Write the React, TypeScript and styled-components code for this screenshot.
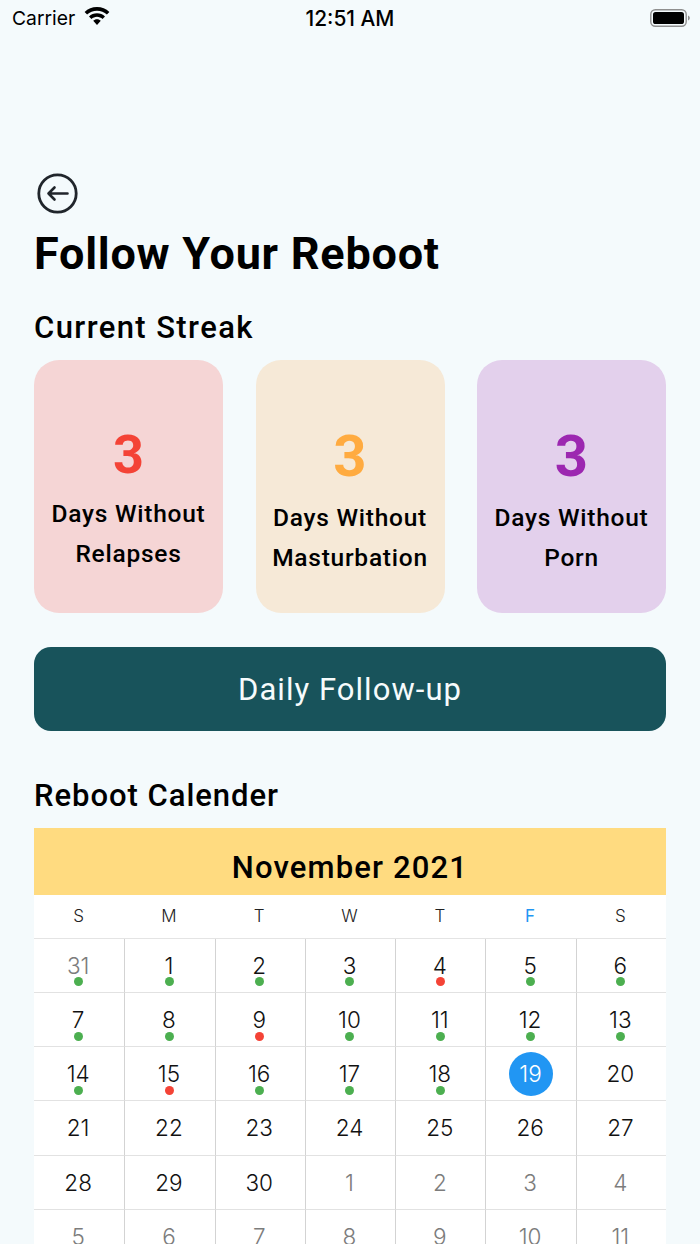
import React from "react";
import styled, { createGlobalStyle } from "styled-components";

const Global = createGlobalStyle`
  html, body { margin: 0; padding: 0; height: 1244px; overflow: hidden; background: #f4fafc; }
  #root { height: 1244px; overflow: hidden; }
`;

const Page = styled.div`
  width: 700px;
  height: 1244px;
  overflow: hidden;
  background: #f4fafc;
  font-family: Roboto, "Liberation Sans", sans-serif;
  color: #000;
`;

const StatusBar = styled.div`
  height: 36px;
  display: grid;
  grid-template-columns: 1fr auto 1fr;
  align-items: center;
  padding: 0 12px;
  font-family: Inter, "Liberation Sans", sans-serif;
  color: #000;
`;

const Carrier = styled.div`
  display: flex;
  align-items: center;
  gap: 9px;
  font-size: 19.3px;
  font-weight: 400;
`;

const WifiIcon = styled.svg`
  margin-top: -4px;
`;

const Clock = styled.div`
  font-size: 20.9px;
  font-weight: 500;
`;

const BatteryWrap = styled.div`
  justify-self: end;
  display: flex;
  margin-right: -3px;
`;

const Content = styled.div`
  padding: 137px 34px 0;
  display: flex;
  flex-direction: column;
`;

const BackButton = styled.button`
  border: 0;
  background: none;
  padding: 0;
  margin: 0 0 0 3px;
  width: 41px;
  height: 41px;
  display: block;
  align-self: flex-start;
`;

const Title = styled.h1`
  margin: 13px 0 0;
  font-size: 45px;
  line-height: 54px;
  font-weight: 700;
  letter-spacing: 0.75px;
`;

const SectionTitle = styled.h2<{ $top: number; $spacing: number }>`
  margin: ${(p) => p.$top}px 0 0;
  font-size: 31px;
  line-height: 40px;
  font-weight: 500;
  letter-spacing: ${(p) => p.$spacing}px;
`;

const Cards = styled.div`
  margin-top: 12px;
  display: grid;
  grid-template-columns: repeat(3, 189px);
  justify-content: space-between;
`;

const Card = styled.div<{ $bg: string; $shift: number }>`
  height: 253px;
  background: ${(p) => p.$bg};
  border-radius: 25px;
  display: flex;
  flex-direction: column;
  align-items: center;
  padding-top: ${(p) => p.$shift}px;
  box-sizing: border-box;
`;

const Count = styled.div<{ $color: string; $size: number }>`
  color: ${(p) => p.$color};
  font-size: ${(p) => p.$size}px;
  font-weight: 700;
  line-height: 60px;
  height: 60px;
`;

const CardLabel = styled.div<{ $gap: number }>`
  margin-top: ${(p) => p.$gap}px;
  font-size: 24.5px;
  line-height: 40px;
  font-weight: 500;
  letter-spacing: 0.75px;
  text-align: center;
`;

const FollowUp = styled.button`
  margin-top: 34px;
  height: 84px;
  border: 0;
  border-radius: 17px;
  background: #18535b;
  color: #f6fbfc;
  font-family: inherit;
  font-size: 31px;
  font-weight: 400;
  letter-spacing: 1.05px;
`;

const Calendar = styled.div`
  margin-top: 12px;
  background: #fff;
`;

const MonthBar = styled.div`
  height: 67px;
  box-sizing: border-box;
  padding-top: 11px;
  background: #ffdb80;
  display: flex;
  align-items: center;
  justify-content: center;
  font-size: 31px;
  font-weight: 500;
  letter-spacing: 1.15px;
`;

const Weekdays = styled.div`
  height: 43.6px;
  display: grid;
  grid-template-columns: repeat(7, 1fr);
  align-items: center;
  box-sizing: border-box;
  font-family: Inter, "Liberation Sans", sans-serif;
  border-bottom: 1px solid #e4e4e4;
`;

const Weekday = styled.div<{ $active?: boolean }>`
  text-align: center;
  font-size: 17px;
  font-weight: ${(p) => (p.$active ? 400 : 300)};
  margin-left: -1px;
  color: ${(p) => (p.$active ? "#2196f3" : "#222")};
`;

const Grid = styled.div`
  display: grid;
  grid-template-columns: repeat(7, 1fr);
  grid-auto-rows: 54.25px;
  font-family: Inter, "Liberation Sans", sans-serif;
`;

const Cell = styled.div`
  position: relative;
  display: flex;
  align-items: center;
  justify-content: center;
  box-sizing: border-box;
  border-bottom: 1px solid #e2e2e2;
  border-left: 1px solid #d3d3d3;
  &:nth-child(7n + 1) { border-left: 0; }
`;

const DayNumber = styled.span<{ $muted: boolean; $today: boolean }>`
  width: 44px;
  height: 44px;
  margin-left: ${(p) => (p.$today ? "-1px" : "-2px")};
  border-radius: 50%;
  display: flex;
  align-items: center;
  justify-content: center;
  font-size: 22.5px;
  font-weight: 300;
  color: ${(p) => (p.$today ? "#fff" : p.$muted ? "#7c7c7c" : "#111")};
  background: ${(p) => (p.$today ? "#2196f3" : "transparent")};
`;

const Dot = styled.span<{ $color: string }>`
  position: absolute;
  left: 50%;
  bottom: 5.5px;
  width: 9px;
  height: 9px;
  margin-left: -5px;
  border-radius: 50%;
  background: ${(p) => p.$color};
`;

const GREEN = "#4caf50";
const RED = "#f44336";

type Day = { n: number; muted?: boolean; today?: boolean; dot?: string };

const red = [4, 9, 15];
const days: Day[] = [
  { n: 31, muted: true, dot: GREEN },
  ...Array.from({ length: 30 }, (_, i): Day => {
    const n = i + 1;
    return { n, today: n === 19, dot: n < 19 ? (red.includes(n) ? RED : GREEN) : undefined };
  }),
  ...Array.from({ length: 11 }, (_, i): Day => ({ n: i + 1, muted: true })),
];

const cards = [
  { bg: "#f5d5d5", color: "#f44336", size: 54, shift: 65, gap: 9, a: "Days Without", b: "Relapses" },
  { bg: "#f6e9d7", color: "#ffab40", size: 58, shift: 66, gap: 12, a: "Days Without", b: "Masturbation" },
  { bg: "#e3d0ec", color: "#9c27b0", size: 58, shift: 66, gap: 12, a: "Days Without", b: "Porn" },
];

export default function App() {
  return (
    <Page>
      <Global />
      <StatusBar>
        <Carrier>
          Carrier
          <WifiIcon width="26" height="19" viewBox="0 0 26 19">
            <path d="M13 0C8.2 0 3.9 1.9.6 4.9l2.5 2.7C5.7 5.2 9.2 3.7 13 3.7s7.3 1.5 9.9 3.9l2.5-2.7C22.1 1.9 17.8 0 13 0z" fill="#000" />
            <path d="M13 6.2c-3.1 0-5.9 1.2-8 3.2l2.5 2.7c1.4-1.4 3.4-2.3 5.5-2.3s4.1.9 5.5 2.3l2.5-2.7c-2.1-2-4.9-3.2-8-3.2z" fill="#000" />
            <path d="M13 12.2c-1.5 0-2.8.6-3.8 1.6L13 18l3.8-4.2c-1-1-2.3-1.6-3.8-1.6z" fill="#000" />
          </WifiIcon>
        </Carrier>
        <Clock>12:51 AM</Clock>
        <BatteryWrap>
          <svg width="41" height="20" viewBox="0 0 41 20">
            <rect x="0.8" y="1.8" width="35.4" height="16.4" rx="4.5" fill="none" stroke="#8f8f8f" strokeWidth="1.4" />
            <rect x="3" y="4" width="31" height="12" rx="2.6" fill="#000" />
            <path d="M38 7.5c1.2.4 1.8 1.3 1.8 2.5s-.6 2.1-1.8 2.5z" fill="#8f8f8f" />
          </svg>
        </BatteryWrap>
      </StatusBar>
      <Content>
        <BackButton aria-label="Back">
          <svg width="41" height="41" viewBox="0 0 41 41" fill="none" stroke="#20252b" strokeLinecap="round" strokeLinejoin="round">
            <circle cx="20.5" cy="20.5" r="18.7" strokeWidth="2.8" />
            <path d="M30.5 20.5H11.5M17.5 14.5l-6 6 6 6" strokeWidth="2.6" />
          </svg>
        </BackButton>
        <Title>Follow Your Reboot</Title>
        <SectionTitle $top={27} $spacing={1.4}>Current Streak</SectionTitle>
        <Cards>
          {cards.map((c) => (
            <Card key={c.b} $bg={c.bg} $shift={c.shift}>
              <Count $color={c.color} $size={c.size}>3</Count>
              <CardLabel $gap={c.gap}>
                {c.a}
                <br />
                {c.b}
              </CardLabel>
            </Card>
          ))}
        </Cards>
        <FollowUp>Daily Follow-up</FollowUp>
        <SectionTitle $top={45} $spacing={0.97}>Reboot Calender</SectionTitle>
        <Calendar>
          <MonthBar>November 2021</MonthBar>
          <Weekdays>
            {["S", "M", "T", "W", "T", "F", "S"].map((d, i) => (
              <Weekday key={i} $active={i === 5}>{d}</Weekday>
            ))}
          </Weekdays>
          <Grid>
            {days.map((d, i) => (
              <Cell key={i}>
                <DayNumber $muted={!!d.muted} $today={!!d.today}>{d.n}</DayNumber>
                {d.dot && <Dot $color={d.dot} />}
              </Cell>
            ))}
          </Grid>
        </Calendar>
      </Content>
    </Page>
  );
}
